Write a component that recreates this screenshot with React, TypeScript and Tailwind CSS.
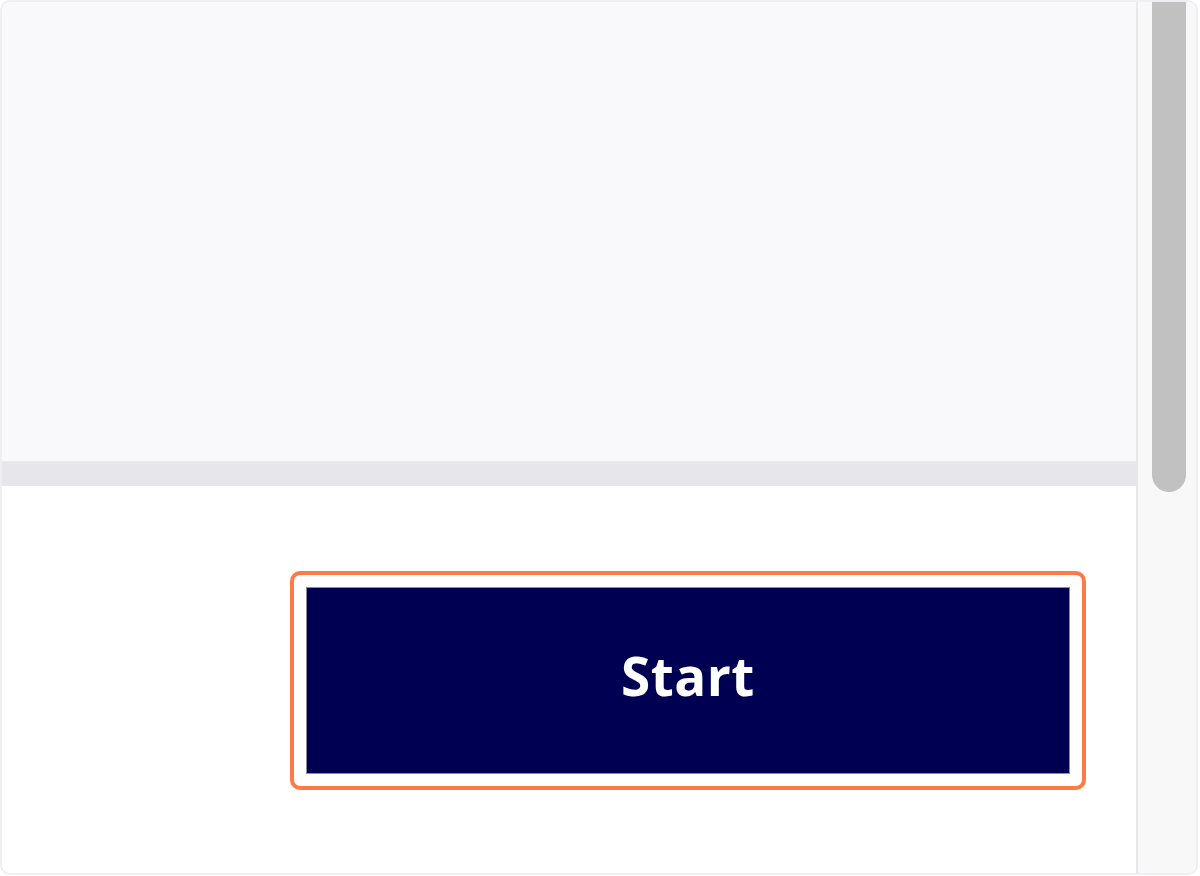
export default function App() {
  return (
    <div className="w-[1200px] h-[876px] bg-white">
      <div className="w-[1198px] h-[875px] border-2 border-[#eeeef3] rounded-[10px] overflow-hidden flex">
        <div className="flex-1 flex flex-col">
          <div className="h-[459px] bg-[#f9f9fb]"></div>
          <div className="h-[25px] bg-[#e6e6eb] border-t border-[#ebebef]"></div>
          <div className="flex-1 bg-white flex justify-end pt-[85px] pr-[50px]">
            <div className="w-[796px] h-[219px] border-[4px] border-[#ff7a45] rounded-[10px] p-[12px]">
              <button
                className="w-full h-full bg-[#000052] border border-[#8a8aa0] text-white flex items-center justify-center"
                style={{ fontFamily: '"Open Sans", "Liberation Sans", sans-serif' }}
              >
                <span className="text-[53px] font-bold tracking-[0.5px] leading-none mb-[10px]">Start</span>
              </button>
            </div>
          </div>
        </div>
        <div className="w-[60px] flex border-l-2 border-[#e8e8ea] bg-[#f8f8f8]">
          <div className="ml-[14px] w-[34px] h-[490px] bg-[#c1c1c1] rounded-b-full"></div>
        </div>
      </div>
    </div>
  );
}
